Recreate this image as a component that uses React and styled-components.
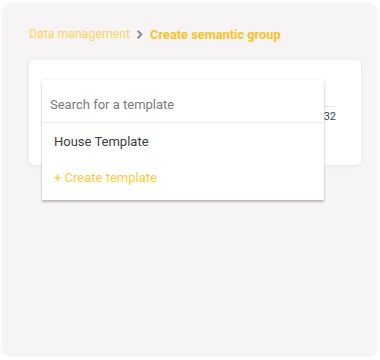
import React from "react"
import styled, { createGlobalStyle } from "styled-components"

const GlobalStyle = createGlobalStyle`
    body {
        margin: 0;
        background: #ffffff;
        font-family: Roboto, "Liberation Sans", sans-serif;
    }
`

const Panel = styled.div`
    box-sizing: border-box;
    width: 375px;
    height: 354px;
    margin: 3px 0 0 2px;
    padding: 21px 16px 0 27px;
    background: #f6f4f5;
    border-radius: 10px;
    box-shadow: 0 0 3px rgba(0, 0, 0, 0.06);
`

const Breadcrumb = styled.nav`
    display: flex;
    align-items: center;
    height: 20px;
`

const Crumb = styled.span`
    font-size: ${props => props.active ? "12.8px" : "12.3px"};
    color: ${props => props.active ? "#fbc225" : "#fdd35a"};
    font-weight: ${props => props.active ? 700 : 400};
`

const Chevron = styled.svg`
    width: 15px;
    height: 15px;
    margin: 0 3px 0 2px;
`

const Card = styled.div`
    position: relative;
    box-sizing: border-box;
    width: 332px;
    height: 105px;
    margin-top: 16px;
    padding: 0 25px 0 13px;
    background: #ffffff;
    border-radius: 5px;
    box-shadow: 0 1px 4px rgba(0, 0, 0, 0.07);
`

const Field = styled.div`
    height: 46px;
    border-bottom: 1px solid #e6e6e6;
`

const Counter = styled.div`
    text-align: right;
    font-size: 11px;
    line-height: 14px;
    margin-top: 3px;
    color: #37474f;
`

const Dropdown = styled.div`
    position: absolute;
    left: 13px;
    top: 20px;
    width: 282px;
    background: #ffffff;
    padding-bottom: 5px;
    box-shadow: 0 2px 2px rgba(0, 0, 0, 0.22), 0 0 3px rgba(0, 0, 0, 0.08);
`

const Search = styled.div`
    display: flex;
    align-items: center;
    height: 43px;
    padding: 7px 0 0 8px;
    box-sizing: border-box;
    border-bottom: 1px solid #ececec;
    font-size: 13px;
    color: #7a7a7a;
`

const Option = styled.div`
    display: flex;
    align-items: center;
    height: 36px;
    padding-left: 12px;
    font-size: 13px;
    font-weight: 400;
    color: ${props => props.create ? "#fdcb3a" : "#3d3d3d"};
`

export default function App() {
    return (
        <>
            <GlobalStyle />
            <Panel>
                <Breadcrumb>
                    <Crumb>Data management</Crumb>
                    <Chevron viewBox="0 0 24 24">
                        <path d="M9 6l6 6-6 6" fill="none" stroke="#8a8a8a" strokeWidth="3" />
                    </Chevron>
                    <Crumb active>Create semantic group</Crumb>
                </Breadcrumb>
                <Card>
                    <Field />
                    <Counter>0/32</Counter>
                    <Dropdown>
                        <Search>Search for a template</Search>
                        <Option>House Template</Option>
                        <Option create>+ Create template</Option>
                    </Dropdown>
                </Card>
            </Panel>
        </>
    )
}
